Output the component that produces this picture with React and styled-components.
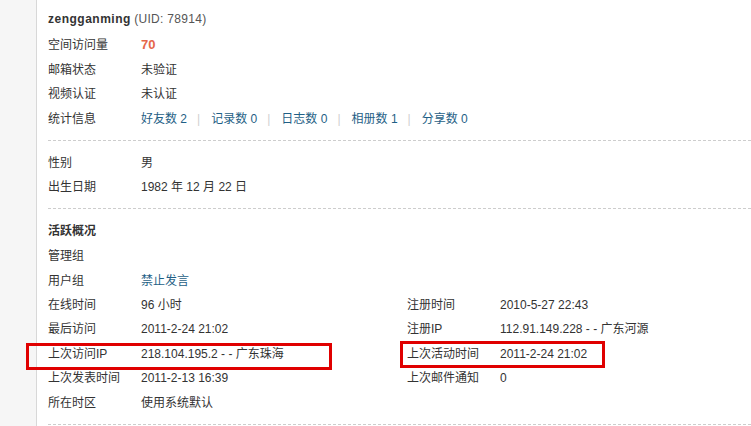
import styled, { createGlobalStyle } from "styled-components";

const GlobalStyle = createGlobalStyle`
  html, body {
    margin: 0;
    padding: 0;
    background: #fff;
  }
  body {
    font: 12px "Liberation Sans", "Noto Sans CJK SC", sans-serif;
    color: #333;
  }
  ul {
    margin: 0;
    padding: 0;
    list-style: none;
  }
`;

const stats = [
  ["好友数", 2],
  ["记录数", 0],
  ["日志数", 0],
  ["相册数", 1],
  ["分享数", 0],
];

const App = () => {
  return (
    <>
      <GlobalStyle />
      <Page>
        <Side />
        <Main>
          <Section $first>
            <UserName>
              <strong>zengganming</strong> <span>(UID: 78914)</span>
            </UserName>
            <Row>
              <Label>空间访问量</Label>
              <Hot>70</Hot>
            </Row>
            <Row>
              <Label>邮箱状态</Label>
              <span>未验证</span>
            </Row>
            <Row>
              <Label>视频认证</Label>
              <span>未认证</span>
            </Row>
            <Row>
              <Label>统计信息</Label>
              {stats.map(([name, count], i) => (
                <span key={name}>
                  {i > 0 && <Pipe>|</Pipe>}
                  <Link>
                    {name} {count}
                  </Link>
                </span>
              ))}
            </Row>
          </Section>

          <Section>
            <Row>
              <Label>性别</Label>
              <span>男</span>
            </Row>
            <Row>
              <Label>出生日期</Label>
              <span>1982 年 12 月 22 日</span>
            </Row>
          </Section>

          <Section>
            <Heading>活跃概况</Heading>
            <Row>
              <Label>管理组</Label>
            </Row>
            <Row>
              <Label>用户组</Label>
              <Link>禁止发言</Link>
            </Row>
            <Columns>
              <ul>
                <Row>
                  <Label>在线时间</Label>
                  <span>96 小时</span>
                </Row>
                <Row>
                  <Label>最后访问</Label>
                  <span>2011-2-24 21:02</span>
                </Row>
                <Row>
                  <Label>上次访问IP</Label>
                  <span>218.104.195.2 - - 广东珠海</span>
                  <Mark $left={-22} $top={1} $width={306} />
                </Row>
                <Row>
                  <Label>上次发表时间</Label>
                  <span>2011-2-13 16:39</span>
                </Row>
                <Row>
                  <Label>所在时区</Label>
                  <span>使用系统默认</span>
                </Row>
              </ul>
              <ul>
                <Row>
                  <Label>注册时间</Label>
                  <span>2010-5-27 22:43</span>
                </Row>
                <Row>
                  <Label>注册IP</Label>
                  <span>112.91.149.228 - - 广东河源</span>
                </Row>
                <Row>
                  <Label>上次活动时间</Label>
                  <span>2011-2-24 21:02</span>
                  <Mark $left={-7} $top={-1} $width={205} />
                </Row>
                <Row>
                  <Label>上次邮件通知</Label>
                  <span>0</span>
                </Row>
              </ul>
            </Columns>
          </Section>
        </Main>
      </Page>
    </>
  );
};

export default App;

const Page = styled.div`
  display: flex;
  min-height: 426px;
  overflow: hidden;
`;

const Side = styled.div`
  flex: 0 0 36px;
  background: #f6f6f6;
  border-right: 1px solid #d8d8d8;
`;

const Main = styled.div`
  flex: 1;
  padding-left: 11px;
  min-width: 0;
`;

const Section = styled.ul`
  padding: ${(p) => (p.$first ? "7px" : "10px")} 0 9px;
  border-bottom: 1px dashed #cdcdcd;
`;

const UserName = styled.li`
  height: 24px;
  line-height: 24px;
  margin-bottom: 2px;

  strong {
    font-weight: bold;
    color: #333;
    letter-spacing: 0.5px;
  }
  span {
    color: #555;
    letter-spacing: 0.3px;
  }
`;

const Heading = styled.li`
  height: 24px;
  line-height: 24px;
  font-weight: bold;
  margin-bottom: 1px;
`;

const Row = styled.li`
  position: relative;
  display: flex;
  align-items: center;
  height: 24px;
  line-height: 24px;
  white-space: nowrap;

  & + & {
    margin-top: 0.5px;
  }
`;

const Label = styled.em`
  flex: 0 0 93px;
  font-style: normal;
  color: #333;
`;

const Hot = styled.span`
  font-weight: bold;
  color: #e5664a;
  font-size: 13px;
`;

const Link = styled.a`
  color: #1f5f86;
  cursor: pointer;
`;

const Pipe = styled.span`
  color: #d0d0d0;
  margin: 0 11px 0 10px;
`;

const Columns = styled.div`
  display: grid;
  grid-template-columns: 359px 1fr;
`;

const Mark = styled.span`
  position: absolute;
  left: ${(p) => p.$left}px;
  top: ${(p) => p.$top}px;
  width: ${(p) => p.$width}px;
  height: 27px;
  border: 3px solid #e00000;
  box-sizing: border-box;
  pointer-events: none;
`;
